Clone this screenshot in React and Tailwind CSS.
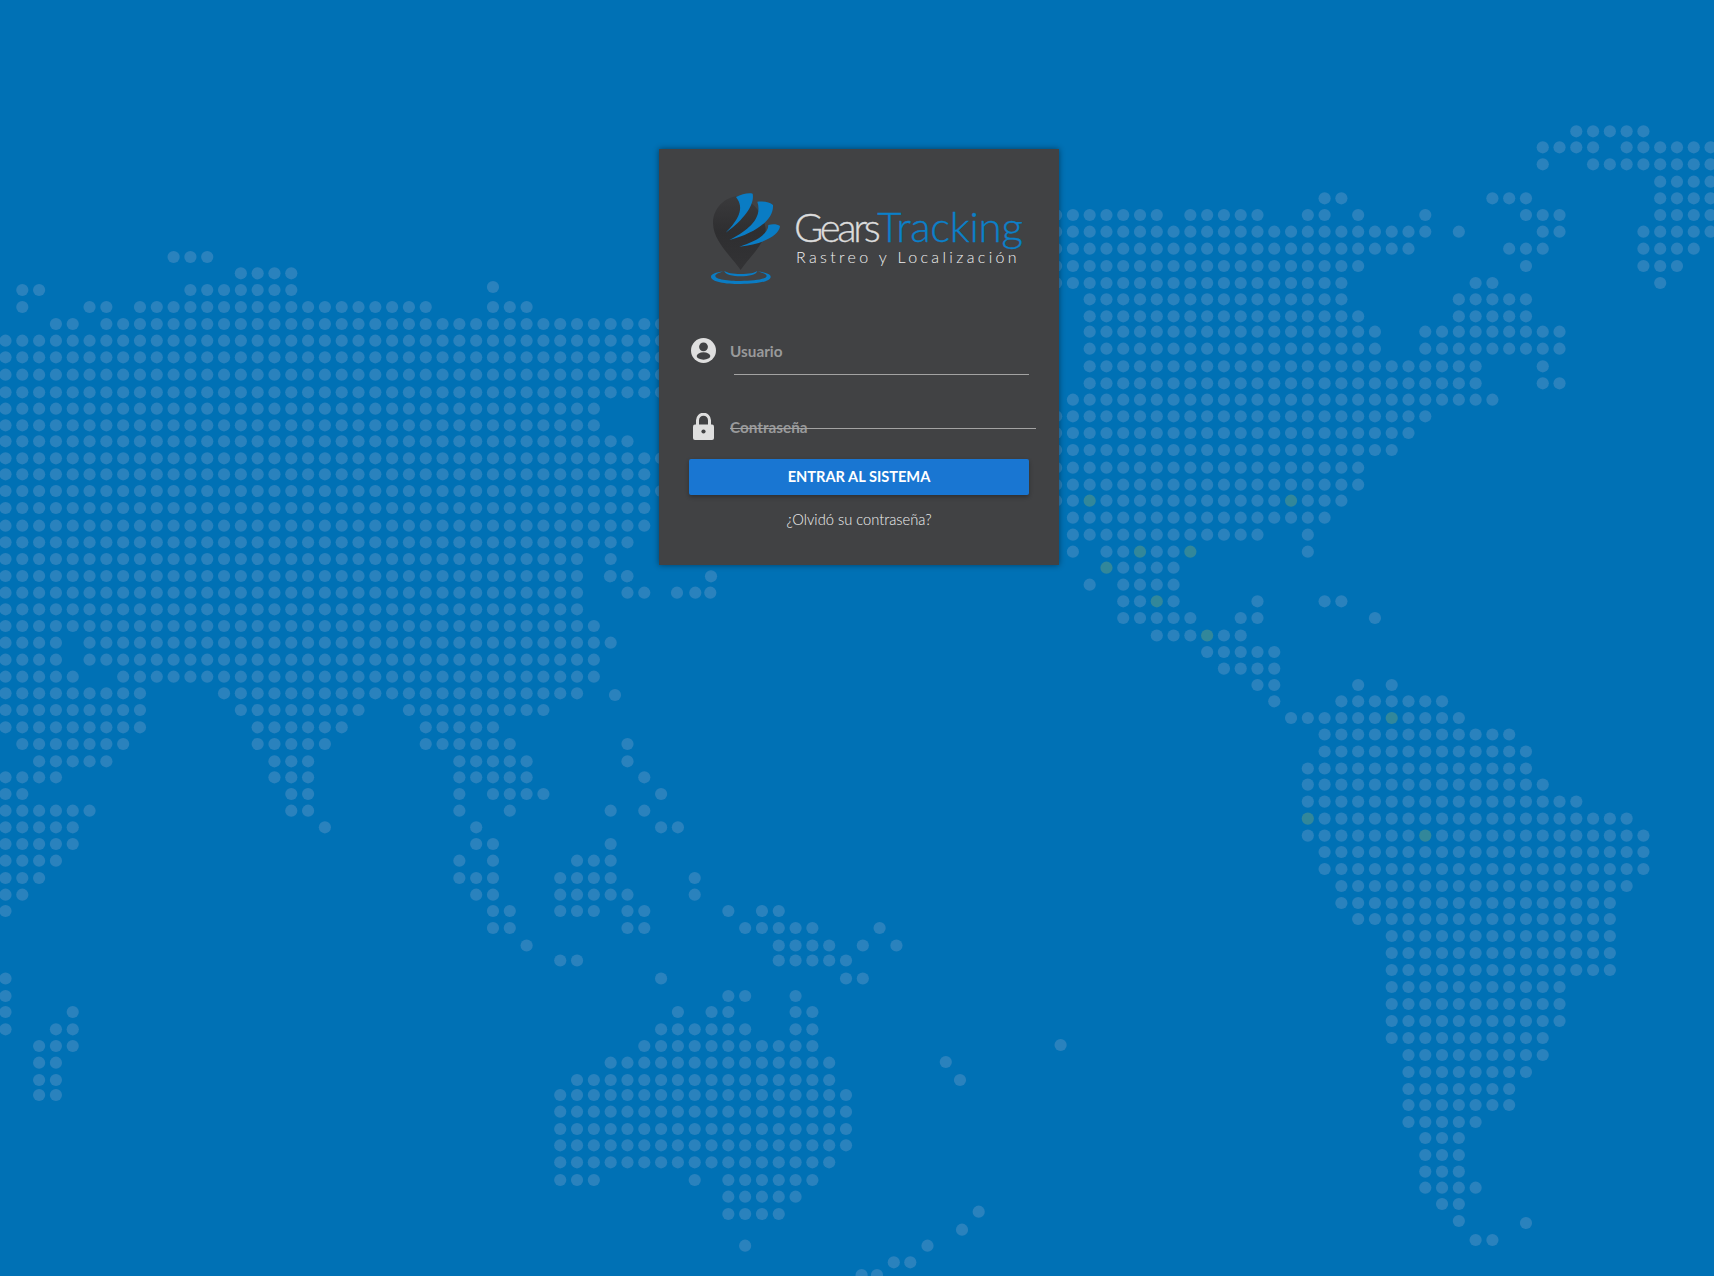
const LEFT = [
  [257, "10-12"], [273.3, "14-17"], [290, "1-2,11-17"], [287, "29"], [307, "1,5-6,8-25,29-31"],
  [324, "3-4,6-39"], [340.7, "0-39"], [357.3, "0-39"], [374.7, "0-39"], [392.3, "0-39"],
  [408.7, "0-35"], [425.3, "0-35"], [441.3, "0-37"], [458.3, "0-39"], [474.3, "0-38"],
  [491, "0-39"], [508, "0-38"], [525.7, "0-38"], [542.3, "0-37"], [559, "0-34,36"],
  [576, "0-34,36-37"], [592.7, "0-34,37-38"], [609.3, "0-34"], [626, "0-35"],
  [642.7, "0-3,5-36"], [659.7, "0-3,5-35"], [676.7, "0-4,7-35"], [693.3, "0-8,13-34"],
  [710, "0-8,14-21,24-32"], [727.3, "0-8,15-20,25-29"], [744, "1-7,15-19,25-30,37"],
  [761.3, "2-6,16-18,27-31,37"], [777.3, "0-3,16-18,27-31,38"], [794, "0-1,17-18,27,29-32,39"],
  [810.7, "0-5,17-18,27,30,36,38"], [827.3, "0-4,19,28,39-40"], [844, "0-4,28-29,36"],
  [860.7, "0-3,27,29,34-36"], [878, "0-2,27-29,33-36,41"], [894.7, "0-1,28-29,33-37,41"],
  [911, "0,29-30,33-35,37-38,43,45-46"], [928, "29-30,37-38,44-48,52"], [945.5, "31,46-49,51,53"],
  [960.5, "33-34,46-50"], [978.5, "0,39,50-51"], [996, "0,43-44,47"], [1012, "0,4,40,42-43,47-48"],
  [1029.3, "0,3-4,39-44,47-48"], [1046, "2-4,38-48"], [1062.7, "2-3,36-49"], [1080, "2-3,34-49"],
  [1095, "2-3,33-50"], [1111.7, "33-50"], [1129, "33-50"], [1145.3, "33-50"], [1162.3, "33-49"],
  [1180, "33-35,41,43-48"], [1196.7, "43-47"], [1214, "43-46"], [1245.7, "44"],
];

const RIGHT = [
  [131.3, "30-34"], [147.3, "28-31,33-38"], [164.3, "28,31-38"], [181.7, "35-38"],
  [198.3, "15-16,25-27,35-38"], [215, "-1-5,7-11,14-15,17,21,27-29,35-38"],
  [231.7, "-1-21,23,28-29,34-38"], [248.7, "-1-20,26-28,34-37"], [266, "-1-17,27,34-36"],
  [283, "-1-16,24-25,35"], [299.3, "1-16,23-27"], [316.3, "1-17,23-27"], [331.7, "1-18,21-29"],
  [348.7, "1-18,21-29"], [366.3, "1-24,28"], [383.3, "1-24,28-29"], [399.7, "0-25"],
  [416.3, "-1-21"], [433, "-1-20"], [450, "-1-19"], [467.7, "-1-17"], [484.7, "-1-17"],
  [500.7, "-1-16"], [517.7, "0-15"], [534.7, "0-11,14"], [551.7, "0,2-7,14"], [567.7, "2-6"],
  [584.7, "1,3-6"], [601.3, "3-6,11,15-16"], [618, "3-7,10-11,18"], [635.5, "5-10"],
  [652, "8-12"], [668.6, "9-12"], [685, "11-12,17,19"], [701.3, "12,16-22"], [718, "13-23"],
  [734.5, "15-26"], [751.5, "15-27"], [768.5, "14-27"], [784.6, "14-28"], [801.6, "14-30"],
  [818.6, "14-33"], [835.6, "14-34"], [852, "15-34"], [869, "15-34"], [886, "16-33"],
  [903, "16-32"], [919, "17-32"], [936, "19-32"], [953, "19-32"], [970, "19-32"], [987, "19-29"],
  [1004, "19-29"], [1021, "19-29"], [1038, "19-28"], [1055, "20-28"], [1072, "20-27"],
  [1089, "20-26"], [1105, "20-26"], [1122, "20-24"], [1138, "21-23"], [1155, "21-23"],
  [1171.6, "21-23"], [1187.7, "21-24"], [1204, "22-23"], [1221, "23"], [1223, "27"], [1240, "24-25"],
];

const LOOSE = [
  [610, 576.3], [627, 576.3], [711, 576.3], [677, 592.7], [695.3, 592.7], [710.3, 592.7],
  [615, 695], [1060.6, 1045],
  [945.8, 1062], [960, 1080], [978.7, 1211.7], [962, 1229.7], [927.5, 1245.7],
  [893.8, 1262.3], [910.3, 1262.3], [861.6, 1275], [877, 1275],
];

const GREEN = new Set([
  "1@500.7", "13@500.7", "4@551.7", "7@551.7", "2@567.7", "5@601.3", "8@635.5", "19@718", "14@818.6", "21@835.6",
]);

function parse(ranges) {
  const out = [];
  for (const part of ranges.split(",")) {
    const m = part.match(/^(-?\d+)(?:-(-?\d+))?$/);
    const a = Number(m[1]);
    const b = m[2] === undefined ? a : Number(m[2]);
    for (let i = a; i <= b; i++) out.push(i);
  }
  return out;
}

function DotMap() {
  const dots = [];
  for (const [y, r] of LEFT) for (const i of parse(r)) dots.push([5.5 + 16.81 * i, y, false]);
  for (const [y, r] of RIGHT) for (const c of parse(r)) dots.push([1072.9 + 16.78 * c, y, GREEN.has(`${c}@${y}`)]);
  for (const [x, y] of LOOSE) dots.push([x, y, false]);
  return (
    <svg className="absolute inset-0 h-full w-full" viewBox="0 0 1714 1276" aria-hidden="true">
      {dots.map(([x, y, g], k) => (
        <circle key={k} cx={x} cy={y} r="6.1" fill={g ? "#32879a" : "#2a82bd"} />
      ))}
    </svg>
  );
}

function Pin() {
  return (
    <svg className="h-[105px] w-[85px] shrink-0" viewBox="0 0 255 315" aria-hidden="true">
      <defs>
        <linearGradient id="pinfill" x1="0" y1="0" x2="0" y2="1">
          <stop offset="0" stopColor="#3a3a3c" />
          <stop offset="0.5" stopColor="#2e2e30" />
          <stop offset="1" stopColor="#333335" />
        </linearGradient>
      </defs>
      <path d="M122 255C95 215 40 170 39 115C38 70 75 35 115 33C165 50 190 90 197 130C200 170 150 215 122 255Z" fill="url(#pinfill)" />
      <path d="M77 143C115 105 135 70 108 36C125 28 145 22 158 26C165 60 130 105 77 143Z" fill="#0a7cc4" />
      <path d="M88 165C135 140 190 105 172 50C190 48 210 52 219 60C222 105 165 145 88 165Z" fill="#0a7cc4" />
      <path d="M118 185C160 172 205 150 205 120C220 116 232 118 240 123C238 150 190 178 118 185Z" fill="#0a7cc4" />
      <path d="M72 259C45 262 33 268 33 275C33 290 75 297 122 297C170 297 212 290 212 275C212 268 195 262 172 259C190 264 200 268 200 273C200 283 160 288 122 288C85 288 46 283 46 273C46 268 55 264 72 259Z" fill="#0a7cc4" />
      <path d="M73 257C73 268 100 274 122 274C145 274 172 268 172 257C168 263 145 267 122 267C100 267 78 263 73 257Z" fill="#0a7cc4" />
    </svg>
  );
}

function UserIcon() {
  return (
    <svg className="h-[25px] w-[25px]" viewBox="0 0 25 25" aria-hidden="true">
      <circle cx="12.5" cy="12.5" r="12.5" fill="#dfdfdf" />
      <circle cx="12.5" cy="8.8" r="4.4" fill="#414244" />
      <ellipse cx="12.5" cy="18" rx="6.8" ry="3.7" fill="#414244" />
    </svg>
  );
}

function LockIcon() {
  return (
    <svg className="h-[27px] w-[21px]" viewBox="0 0 21 27" aria-hidden="true">
      <path d="M4.5 13V7.2a6 6 0 0 1 12 0V13" fill="none" stroke="#dfdfdf" strokeWidth="3" />
      <rect x="0" y="11.5" width="21" height="15.5" rx="2" fill="#dfdfdf" />
      <circle cx="10.5" cy="18.5" r="2.1" fill="#414244" />
    </svg>
  );
}

export default function App() {
  return (
    <div className="relative h-[1276px] overflow-hidden bg-[#0071b5] font-['Lato','Liberation_Sans',sans-serif]">
      <DotMap />
      <div className="relative flex justify-center pl-[4px] pt-[149px]">
        <div className="h-[416px] w-[400px] bg-[#414244] shadow-[0_0_6px_rgba(0,0,0,0.45)]">
          <div className="flex pl-[41px] pt-[36px]">
            <Pin />
            <div className="ml-[9px] mt-[20px]">
              <div className="flex items-baseline whitespace-nowrap text-[42px] font-light leading-[42px] [-webkit-text-stroke:0.35px]">
                <span className="text-[40px] tracking-[-3.4px] text-[#dcdcdc]">Gears</span>
                <span className="tracking-[-0.3px] text-[#0b80c9]">Tracking</span>
              </div>
              <div className="ml-[2px] mt-[-1px] whitespace-nowrap text-[16px] font-light leading-[20px] tracking-[3.35px] text-[#f0f0f0]">
                Rastreo y Localización
              </div>
            </div>
          </div>

          <div className="ml-[32px] mt-[48px] flex h-[25px] items-center gap-[14px]">
            <UserIcon />
            <span className="text-[15.3px] font-bold leading-[20px] text-[#999a9b]">Usuario</span>
          </div>
          <div className="ml-[75px] mt-[11px] h-px w-[295px] bg-[#a3a3a3]" />

          <div className="relative ml-[32px] mt-[38px] flex h-[27px] items-center gap-[14px]">
            <div className="flex w-[25px] justify-center">
              <LockIcon />
            </div>
            <span className="text-[15.3px] font-bold leading-[20px] text-[#999a9b]">Contraseña</span>
            <div className="absolute left-[39px] top-[15px] h-px w-[306px] bg-[#a3a3a3]" />
          </div>

          <button className="ml-[30px] mt-[19px] flex h-[36px] w-[340px] items-center justify-center rounded-[2px] bg-[#1976d2] text-[14.6px] font-bold text-white shadow-[0_2px_4px_rgba(0,0,0,0.3)]">
            ENTRAR AL SISTEMA
          </button>

          <div className="mt-[12px] text-center text-[14.7px] font-light leading-[24px] text-[#f0f0f0]">
            ¿Olvidó su contraseña?
          </div>
        </div>
      </div>
    </div>
  );
}
